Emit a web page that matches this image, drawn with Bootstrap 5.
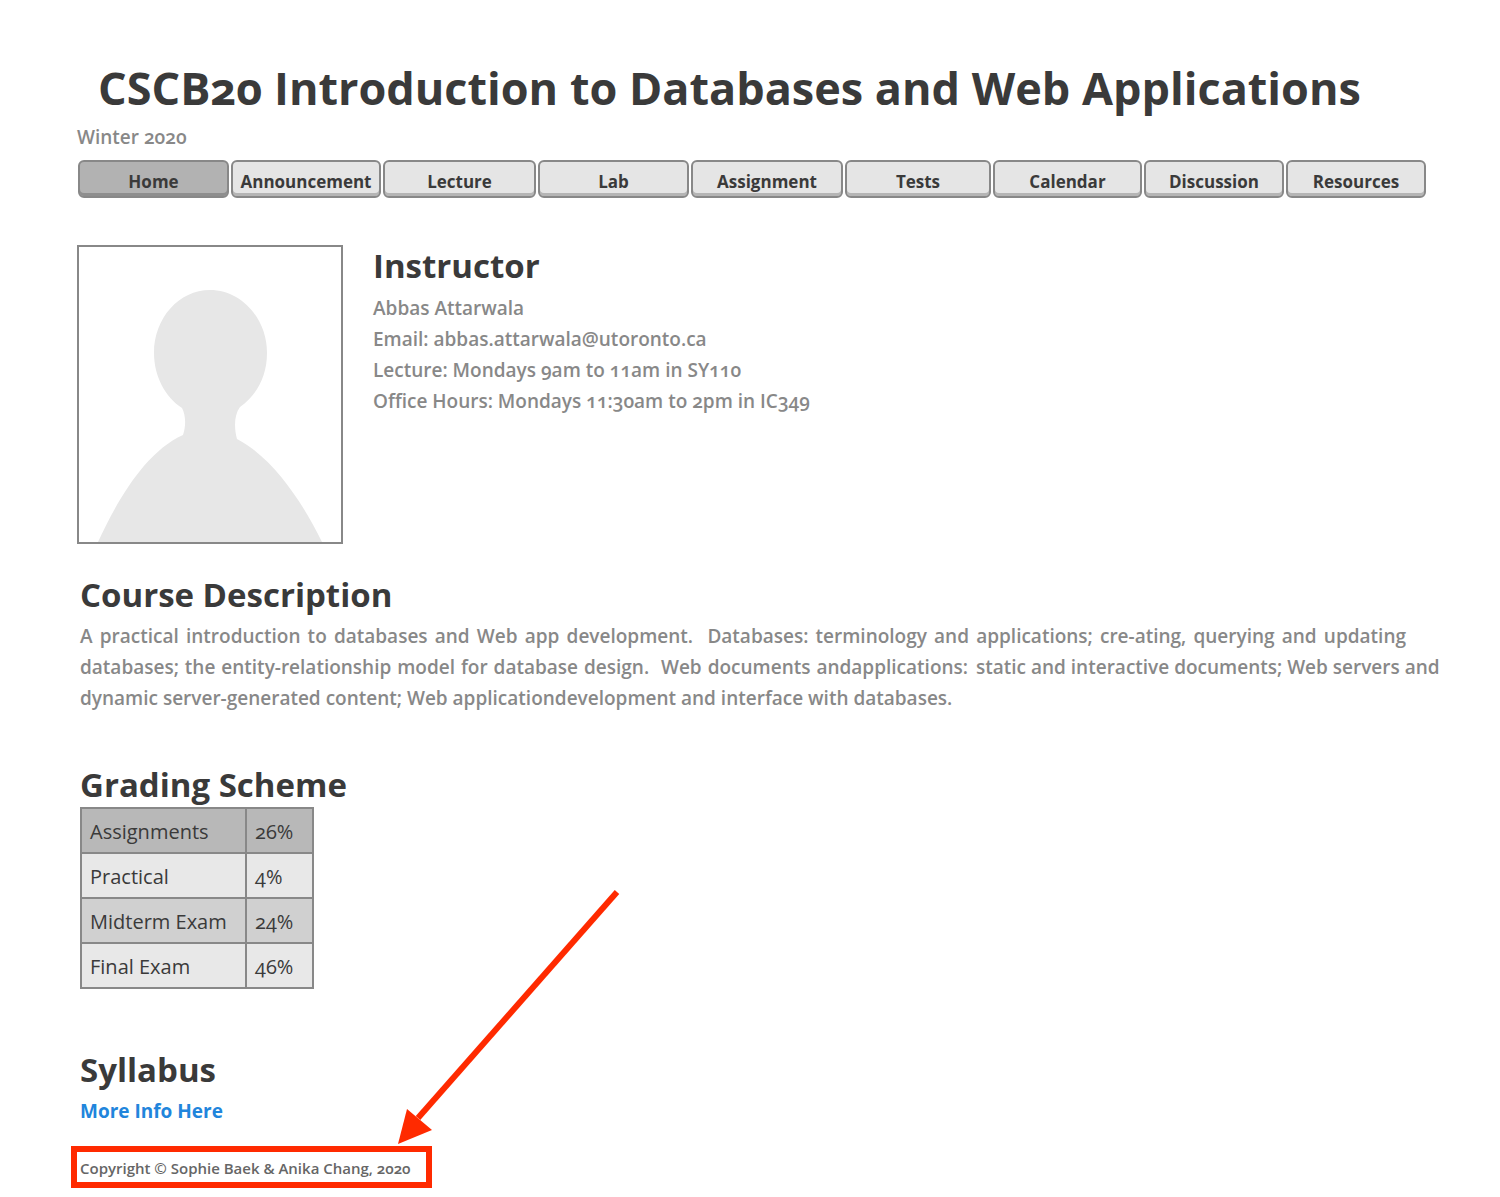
<!DOCTYPE html>
<html lang="en">
<head>
<meta charset="utf-8">
<meta name="viewport" content="width=device-width, initial-scale=1">
<title>CSCB20 Introduction to Databases and Web Applications</title>
<link href="https://cdn.jsdelivr.net/npm/bootstrap@5.3.0/dist/css/bootstrap.min.css" rel="stylesheet">
<style>
  body {
    font-family: "Open Sans", "Noto Sans", sans-serif;
    font-variant-numeric: oldstyle-nums;
    font-size: 19px;
    line-height: 31px;
    font-weight: 600;
    color: #888;
    background: #fff;
  }
  .page { padding: 58px 60px 9px 77px; }
  h1, h2 { color: #3a3a3a; font-weight: 700; margin: 0; }
  h1 { font-size: 45px; line-height: 60px; padding-left: 21px; }
  h2 { font-size: 33px; line-height: 42px; margin-bottom: 5px; }
  .term { margin: 4px 0 7px; }
  .site-nav {
    display: grid;
    grid-template-columns: 151fr 150fr 153fr 151fr 152fr 146fr 149fr 140fr 140fr;
    gap: 2px;
    margin: 0 14px 0 1px;
  }
  .tab {
    height: 38px;
    padding: 6px 0 0;
    border: 2px solid #888;
    border-radius: 6px;
    background: #e5e5e5;
    box-shadow: inset 0 -3px #b5b5b5;
    color: #3a3a3a;
    font-size: 17px;
    line-height: 28px;
    font-weight: 700;
    text-align: center;
    text-decoration: none;
  }
  .tab.active { background: #b2b2b2; box-shadow: inset 0 -3px #8e8e8e; }
  .instructor { margin-top: 47px; gap: 30px; }
  .instructor h2 { margin-bottom: 6px; }
  .photo { width: 266px; height: 299px; border: 2px solid #888; flex: none; }
  .section { padding-left: 3px; }
  .description { margin-top: 30px; }
  .grading { margin-top: 50px; }
  .grading h2 { margin-bottom: 1px; }
  .syllabus { margin-top: 60px; }
  .spread { text-align: justify; text-align-last: justify; }
  .line-one { max-width: 1326px; }
  .line-two { flex: 0 1 888px; }
  .grades { width: 234px; border-collapse: collapse; table-layout: fixed; color: #3a3a3a; font-size: 20px; }
  .grades th, .grades td { height: 45px; padding: 2px 8px 0; border: 2px solid #888; font-weight: 500; }
  .grades th { width: 165px; white-space: nowrap; }
  .grades tr { background: #e8e8e8; }
  .grades tr:first-child { background: #b8b8b8; }
  .grades tr:nth-child(3) { background: #d0d0d0; }
  .more { color: #2185dc; font-weight: 700; text-decoration: none; }
  .notice {
    width: 361px;
    height: 42px;
    margin: 19px 0 0 -6px;
    padding: 6px 3px 0;
    border: 6px solid #ff2a00;
    color: #666;
    font-size: 15px;
    line-height: 20px;
  }
  .arrow { position: absolute; left: 321px; bottom: 44px; }
</style>
</head>
<body>
<div class="page">
  <header>
    <h1>CSCB20 Introduction to Databases and Web Applications</h1>
    <p class="term">Winter 2020</p>
    <nav class="site-nav">
      <a class="tab active" href="#" aria-current="page">Home</a>
      <a class="tab" href="#">Announcement</a>
      <a class="tab" href="#">Lecture</a>
      <a class="tab" href="#">Lab</a>
      <a class="tab" href="#">Assignment</a>
      <a class="tab" href="#">Tests</a>
      <a class="tab" href="#">Calendar</a>
      <a class="tab" href="#">Discussion</a>
      <a class="tab" href="#">Resources</a>
    </nav>
  </header>
  <main>
    <section class="instructor d-flex">
      <svg class="photo" viewBox="0 0 262 295" role="img" aria-label="Instructor photo">
        <path fill="#e7e7e7" d="M131 43C162 43 188 71 188 106C188 129 178 148 161 160C155 168 155 181 158 192C193 210 223 254 243 295H19C38 254 66 205 104 188C107 179 107 169 103 161C86 150 75 129 75 106C75 71 100 43 131 43Z"/>
      </svg>
      <div>
        <h2>Instructor</h2>
        <div>Abbas Attarwala</div>
        <div>Email: abbas.attarwala@utoronto.ca</div>
        <div>Lecture: Mondays 9am to 11am in SY110</div>
        <div>Office Hours: Mondays 11:30am to 2pm in IC349</div>
      </div>
    </section>
    <section class="section description">
      <h2>Course Description</h2>
      <div class="spread line-one">A practical introduction to databases and Web app development.&nbsp; Databases: terminology and applications; cre-ating, querying and updating</div>
      <div class="d-flex gap-2"><div class="spread line-two">databases; the entity-relationship model for database design.&nbsp; Web documents andapplications:</div><div class="text-nowrap">static and interactive documents; Web servers and</div></div>
      <div>dynamic server-generated content; Web applicationdevelopment and interface with databases.</div>
    </section>
    <section class="section grading">
      <h2>Grading Scheme</h2>
      <table class="grades">
        <tbody>
          <tr><th scope="row">Assignments</th><td>26%</td></tr>
          <tr><th scope="row">Practical</th><td>4%</td></tr>
          <tr><th scope="row">Midterm Exam</th><td>24%</td></tr>
          <tr><th scope="row">Final Exam</th><td>46%</td></tr>
        </tbody>
      </table>
    </section>
    <section class="section syllabus">
      <h2>Syllabus</h2>
      <a class="more" href="#">More Info Here</a>
    </section>
  </main>
  <footer class="position-relative">
    <svg class="arrow" width="230" height="256" viewBox="0 0 230 256" aria-hidden="true">
      <path d="M219 4L20 230" stroke="#ff2a00" stroke-width="6" fill="none"/>
      <path d="M0 256L9 221L34 242Z" fill="#ff2a00"/>
    </svg>
    <div class="notice">Copyright © Sophie Baek &amp; Anika Chang, 2020</div>
  </footer>
</div>
<script src="https://cdn.jsdelivr.net/npm/bootstrap@5.3.0/dist/js/bootstrap.bundle.min.js"></script>
</body>
</html>
